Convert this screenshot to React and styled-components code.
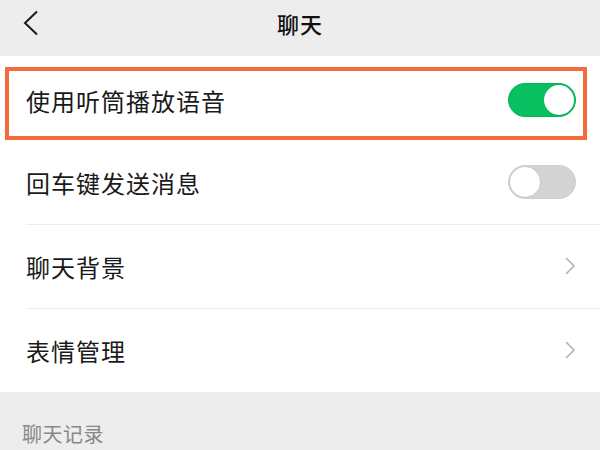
import React from "react"
import styled, { createGlobalStyle } from "styled-components"

const GlobalStyle = createGlobalStyle`
  html, body {
    margin: 0;
    padding: 0;
    background: #ededed;
    font-family: "Noto Sans CJK SC", "Noto Sans", sans-serif;
  }
`

const Page = styled.div`
  width: 600px;
  height: 450px;
  overflow: hidden;
  background: #ededed;
  display: flex;
  flex-direction: column;
`

const Header = styled.header`
  height: 56px;
  flex: 0 0 56px;
  display: flex;
  align-items: center;
  justify-content: center;
  position: relative;
  background: #ededed;
`

const BackButton = styled.button`
  position: absolute;
  left: 18px;
  top: 9px;
  width: 26px;
  height: 28px;
  padding: 0;
  border: none;
  background: none;
  display: flex;
  align-items: center;
  justify-content: center;
`

const Title = styled.h1`
  margin: 0 0 10px;
  font-size: 22px;
  font-weight: 500;
  color: #111;
  letter-spacing: 1px;
`

const List = styled.ul`
  margin: 0;
  padding: 0;
  list-style: none;
  background: #fff;
`

const Row = styled.li`
  position: relative;
  height: 84px;
  box-sizing: border-box;
  display: flex;
  align-items: center;
  justify-content: space-between;
  padding: ${(p) => p.$shift || 0}px 24px 0 26px;
  &:not(:first-child)::before {
    content: "";
    position: absolute;
    top: 0;
    left: 26px;
    right: 0;
    height: 1px;
    background: ${(p) => (p.$hideDivider ? "transparent" : "#ececec")};
  }
`

const Label = styled.span`
  font-size: 24px;
  color: #1a1a1a;
  letter-spacing: 1px;
`

const Highlight = styled.div`
  position: absolute;
  top: 11px;
  left: 5px;
  right: 13px;
  bottom: 0;
  border: 4px solid #f36b3c;
  pointer-events: none;
`

const Switch = styled.span`
  width: 68px;
  height: 34px;
  box-sizing: border-box;
  border-radius: 17px;
  background: ${(p) => (p.$on ? "#07c160" : "#d3d3d3")};
  border: 1px solid ${(p) => (p.$on ? "#07b159" : "#d0d0d0")};
  display: flex;
  align-items: center;
  justify-content: ${(p) => (p.$on ? "flex-end" : "flex-start")};
  padding: 1px;
`

const Knob = styled.span`
  width: 30px;
  height: 30px;
  border-radius: 50%;
  background: #fff;
  box-shadow: 0 0 1px rgba(0, 0, 0, 0.25);
`

const Section = styled.div`
  flex: 1;
  padding: 29px 22px 0;
  background: #ededed;
`

const SectionTitle = styled.span`
  font-size: 20px;
  line-height: 26px;
  color: #888;
  letter-spacing: 0.5px;
`

const Chevron = () => (
  <svg width="12" height="20" viewBox="0 0 12 20">
    <path d="M2 2 L10 10 L2 18" fill="none" stroke="#b3b3b3" strokeWidth="1.6" />
  </svg>
)

const BackIcon = () => (
  <svg width="18" height="26" viewBox="0 0 18 26">
    <path d="M15 1.5 L3 13 L15 24.5" fill="none" stroke="#1a1a1a" strokeWidth="2" />
  </svg>
)

const App = () => {
  return (
    <Page>
      <GlobalStyle />
      <Header>
        <BackButton>
          <BackIcon />
        </BackButton>
        <Title>聊天</Title>
      </Header>
      <List>
        <Row $shift={4}>
          <Label>使用听筒播放语音</Label>
          <Switch $on>
            <Knob />
          </Switch>
          <Highlight />
        </Row>
        <Row $hideDivider>
          <Label>回车键发送消息</Label>
          <Switch>
            <Knob />
          </Switch>
        </Row>
        <Row>
          <Label>聊天背景</Label>
          <Chevron />
        </Row>
        <Row>
          <Label>表情管理</Label>
          <Chevron />
        </Row>
      </List>
      <Section>
        <SectionTitle>聊天记录</SectionTitle>
      </Section>
    </Page>
  )
}

export default App
